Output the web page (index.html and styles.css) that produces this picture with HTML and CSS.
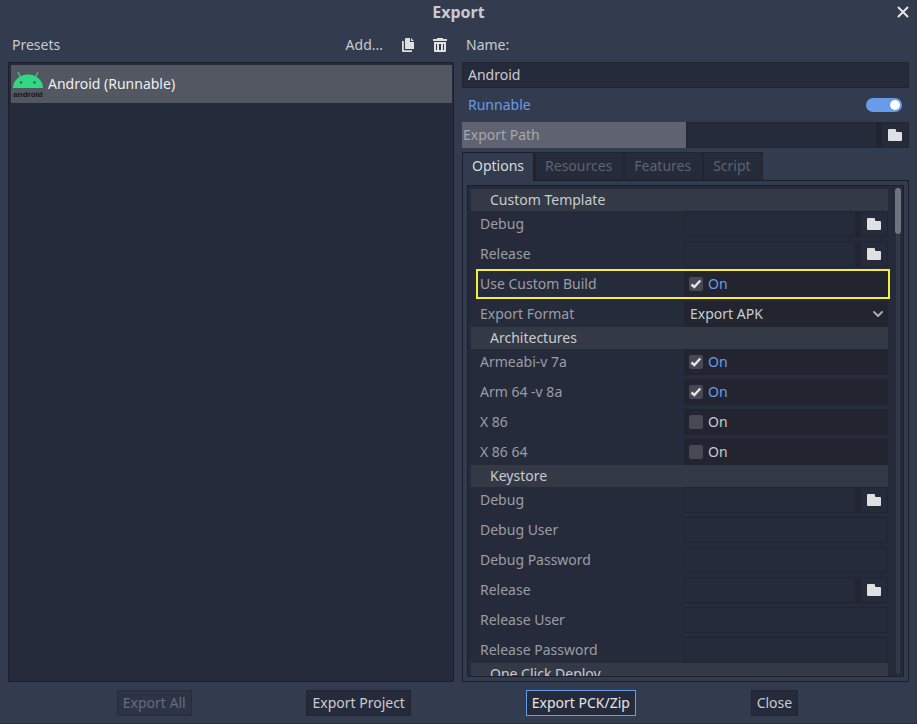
FILE: index.html
```html
<!DOCTYPE html>
<html lang="en">
<head>
<meta charset="utf-8">
<title>Export</title>
<link rel="stylesheet" href="styles.css">
</head>
<body>
<svg class="defs" aria-hidden="true">
  <symbol id="folder" viewBox="0 0 14 12"><path d="M0 1a1 1 0 0 1 1-1h6a1 1 0 0 1 1 1v1a1 1 0 0 0 1 1h4a1 1 0 0 1 1 1v7a1 1 0 0 1-1 1H1a1 1 0 0 1-1-1z"/></symbol>
  <symbol id="tick" viewBox="0 0 14 14"><path d="M2.500 7.500l2.800 2.500 6-6.500" fill="none" stroke="#e4e4e6" stroke-width="2.400"/></symbol>
</svg>

<header class="titlebar">
  <h1>Export</h1>
  <button class="icon-button close" aria-label="Close dialog">
    <svg width="12" height="12" viewBox="0 0 12 12"><path d="M1.500 1.500l9 9M10.500 1.500l-9 9" fill="none" stroke="#e6e6e8" stroke-width="2" stroke-linecap="round"/></svg>
  </button>
</header>

<main class="columns">
  <section class="column">
    <div class="heading presets-heading">
      <h2>Presets</h2>
      <button class="text-button">Add...</button>
      <button class="icon-button" aria-label="Duplicate preset">
        <svg width="14" height="14" viewBox="0 0 14 14"><path d="M5 0h4v4h4v7H4V1a1 1 0 0 1 1-1zM10 0l3 3h-3zM1 3h1.800v9.200H11V14H2a1 1 0 0 1-1-1z"/></svg>
      </button>
      <button class="icon-button" aria-label="Delete preset">
        <svg width="14" height="14" viewBox="0 0 14 14"><path fill-rule="evenodd" d="M4 0h6v1h4v2H0V1h4zM1 4h12v9a1 1 0 0 1-1 1H2a1 1 0 0 1-1-1zM3 6v6h1V6zM6 6v6h2V6zM10 6v6h1V6z"/></svg>
      </button>
    </div>
    <div class="preset-list">
      <button class="preset">
        <svg width="32" height="32" viewBox="0 0 32 32" aria-hidden="true">
          <path d="M1 20a15 13.500 0 0 1 30 0z" fill="#32d982"/>
          <path d="M8.500 9L6.300 4.500M23.500 9l2.200-4.500" stroke="#32d982" stroke-width="1.200" stroke-linecap="round"/>
          <circle cx="9" cy="14.500" r="1.300" fill="#23704f"/><circle cx="22.500" cy="14.500" r="1.300" fill="#23704f"/>
          <text x="16" y="29" text-anchor="middle" class="logo-text">android</text>
        </svg>
        <span>Android (Runnable)</span>
      </button>
    </div>
  </section>

  <section class="column">
    <div class="heading"><label for="name">Name:</label></div>
    <input class="field" id="name" type="text" value="Android">
    <div class="runnable">
      <label for="runnable">Runnable</label>
      <input class="switch" id="runnable" type="checkbox" role="switch" checked>
    </div>
    <div class="export-path">
      <label for="path">Export Path</label>
      <div class="path"><input class="field" id="path" type="text"><button class="browse" aria-label="Browse export path"><svg><use href="#folder"/></svg></button></div>
    </div>
    <nav class="tabs" role="tablist">
      <button class="tab active" role="tab" aria-selected="true">Options</button>
      <button class="tab" role="tab">Resources</button>
      <button class="tab" role="tab">Features</button>
      <button class="tab" role="tab">Script</button>
    </nav>
    <div class="tab-body">
      <div class="inspector">
        <div class="properties">
          <h3>Custom Template</h3>
          <div class="group">
            <div class="row"><label for="t-debug">Debug</label><div class="path"><input class="field" id="t-debug" type="text"><button class="browse" aria-label="Browse debug template"><svg><use href="#folder"/></svg></button></div></div>
            <div class="row"><label for="t-release">Release</label><div class="path"><input class="field" id="t-release" type="text"><button class="browse" aria-label="Browse release template"><svg><use href="#folder"/></svg></button></div></div>
            <div class="row marked"><label for="custom">Use Custom Build</label><label class="check"><span class="box"><input id="custom" type="checkbox" checked><svg><use href="#tick"/></svg></span><span>On</span></label></div>
            <div class="row"><label for="format">Export Format</label><div class="drop"><select id="format"><option>Export APK</option></select><svg width="12" height="8" viewBox="0 0 12 8"><path d="M2 2l4 4 4-4" fill="none" stroke="#a9abb1" stroke-width="2" stroke-linecap="round" stroke-linejoin="round"/></svg></div></div>
          </div>
          <h3>Architectures</h3>
          <div class="group">
            <div class="row"><label for="v7">Armeabi-v 7a</label><label class="check"><span class="box"><input id="v7" type="checkbox" checked><svg><use href="#tick"/></svg></span><span>On</span></label></div>
            <div class="row"><label for="v8">Arm 64 -v 8a</label><label class="check"><span class="box"><input id="v8" type="checkbox" checked><svg><use href="#tick"/></svg></span><span>On</span></label></div>
            <div class="row"><label for="x86">X 86</label><label class="check"><span class="box"><input id="x86" type="checkbox"><svg><use href="#tick"/></svg></span><span>On</span></label></div>
            <div class="row"><label for="x64">X 86 64</label><label class="check"><span class="box"><input id="x64" type="checkbox"><svg><use href="#tick"/></svg></span><span>On</span></label></div>
          </div>
          <h3>Keystore</h3>
          <div class="group">
            <div class="row"><label for="k-debug">Debug</label><div class="path"><input class="field" id="k-debug" type="text"><button class="browse" aria-label="Browse debug keystore"><svg><use href="#folder"/></svg></button></div></div>
            <div class="row"><label for="k-duser">Debug User</label><input class="field" id="k-duser" type="text"></div>
            <div class="row"><label for="k-dpass">Debug Password</label><input class="field" id="k-dpass" type="password"></div>
            <div class="row"><label for="k-release">Release</label><div class="path"><input class="field" id="k-release" type="text"><button class="browse" aria-label="Browse release keystore"><svg><use href="#folder"/></svg></button></div></div>
            <div class="row"><label for="k-ruser">Release User</label><input class="field" id="k-ruser" type="text"></div>
            <div class="row"><label for="k-rpass">Release Password</label><input class="field" id="k-rpass" type="password"></div>
          </div>
          <h3>One Click Deploy</h3>
        </div>
        <div class="scrollbar"><div class="thumb"></div></div>
      </div>
    </div>
  </section>
</main>

<footer class="actions">
  <button class="action" disabled>Export All</button>
  <button class="action">Export Project</button>
  <button class="action primary">Export PCK/Zip</button>
  <button class="action">Close</button>
</footer>
</body>
</html>
```
FILE: styles.css
```css
:root {
  --base: #333b4f;
  --panel: #262b3b;
  --edge: #202531;
  --line: #1b202c;
  --well: #222530;
  --band: #343946;
  --text: #c9cbd0;
  --muted: #9b9da4;
  --accent: #699ce8;
}

* { box-sizing: border-box; }

body {
  margin: 0;
  height: 100vh;
  display: flex;
  flex-direction: column;
  overflow: hidden;
  background: var(--base);
  border-bottom: 1px solid #2a3042;
  color: var(--text);
  font: 14px/20px "Noto Sans", sans-serif;
}

button, input, select { font: inherit; color: inherit; margin: 0; }
button { border: 0; padding: 0; background: none; }
h1, h2, h3 { margin: 0; font-size: 14px; font-weight: 400; }
svg { display: block; }
.defs { position: absolute; width: 0; height: 0; }

.titlebar {
  display: grid;
  grid-template-columns: 1fr auto 1fr;
  align-items: center;
  height: 24px;
  padding: 0 8px;
}
.titlebar h1 { grid-column: 2; font-size: 16px; font-weight: 700; }
.close { justify-self: end; }
.icon-button { fill: #e0e0e0; }

.columns {
  flex: 1;
  min-height: 0;
  display: grid;
  grid-template-columns: minmax(0, 446fr) minmax(0, 447fr);
  gap: 8px;
  padding: 0 8px;
}
.column { display: flex; flex-direction: column; min-height: 0; }
.heading { display: flex; align-items: center; height: 38px; padding: 4px 4px 0; }
.presets-heading { gap: 18px; padding-right: 7px; }
.presets-heading h2 { flex: 1; }

.preset-list {
  flex: 1;
  padding: 2px 1px 2px 2px;
  background: var(--panel);
  border: 1px solid var(--line);
}
.preset {
  display: flex;
  align-items: center;
  gap: 4px;
  width: 100%;
  height: 38px;
  padding: 0 1px 1px;
  background: #535761;
  color: #eeeff0;
}
.logo-text { font: 700 8px "Liberation Sans", sans-serif; fill: #14171c; }

.field {
  display: block;
  width: 100%;
  min-width: 0;
  height: 26px;
  padding: 0 5px 2px;
  background: var(--panel);
  border: 1px solid var(--edge);
  border-radius: 0;
}

.runnable {
  display: flex;
  align-items: center;
  justify-content: space-between;
  height: 34px;
  padding: 0 7px 0 6px;
  color: var(--accent);
}
.switch {
  appearance: none;
  width: 36px;
  height: 14px;
  padding: 2px;
  border-radius: 7px;
  background: #6b7180;
}
.switch::before {
  content: "";
  display: block;
  width: 10px;
  height: 10px;
  border-radius: 50%;
  background: #fff;
}
.switch:checked { background: var(--accent); }
.switch:checked::before { margin-left: auto; }

.export-path { display: grid; grid-template-columns: 1fr 1fr; height: 26px; }
.export-path > label { padding: 3px 1px; background: #5f6371; color: #a5a7ab; }
.path { display: flex; background: var(--well); }
.path .field { flex: 1; border-right: 0; }
.browse {
  width: 27px;
  height: 26px;
  margin-left: 6px;
  display: grid;
  place-items: center;
  background: var(--panel);
  border: 1px solid var(--edge);
  border-left: 0;
}
.browse svg { width: 14px; height: 12px; fill: #e0e0e0; }

.tabs { display: flex; height: 29px; margin-top: 4px; margin-bottom: -1px; z-index: 1; }
.tab {
  height: 28px;
  padding: 0 11px 2px 9px;
  background: var(--panel);
  border: 1px solid var(--edge);
  border-left-width: 2px;
  border-bottom: 0;
  border-right: 0;
  color: #5f636e;
}
.tab:last-child { border-right: 1px solid var(--edge); }
.tab.active {
  height: 29px;
  padding: 0 9px 2px;
  background: var(--base);
  border: 1px solid var(--line);
  border-bottom: 0;
  color: #d8dade;
}

.tab-body {
  flex: 1;
  min-height: 0;
  display: flex;
  padding: 4px;
  border: 1px solid var(--line);
}
.inspector {
  flex: 1;
  min-width: 0;
  display: flex;
  gap: 5px;
  padding: 0 2px 0 3px;
  background: var(--panel);
  border: 1px solid var(--line);
}
.properties { flex: 1; padding: 3px 2px 0 0; overflow: hidden; }
.properties h3 { height: 22px; line-height: 22px; padding-left: 19px; background: var(--band); }
.group { display: grid; gap: 4px; }
.row {
  display: grid;
  grid-template-columns: minmax(0, 1fr) minmax(0, 1fr);
  align-items: center;
  height: 26px;
  padding-left: 9px;
}
.row > label:first-child { color: var(--muted); }
.marked { position: relative; }
.marked::after {
  content: "";
  position: absolute;
  inset: -2px -2px -2px 5px;
  border: 2px solid #f7ee3e;
  pointer-events: none;
}

.check {
  display: flex;
  align-items: center;
  gap: 5px;
  height: 26px;
  padding-left: 5px;
  background: var(--well);
}
.check:has(:checked) { color: var(--accent); }
.box { display: grid; width: 14px; height: 14px; }
.box > * { grid-area: 1 / 1; width: 14px; height: 14px; }
.box input { appearance: none; background: #464953; border-radius: 2px; }
.box svg { visibility: hidden; pointer-events: none; }
.box input:checked + svg { visibility: visible; }

.drop { display: grid; align-items: center; background: var(--well); }
.drop > * { grid-area: 1 / 1; }
.drop select {
  appearance: none;
  height: 26px;
  padding: 0 6px;
  border: 0;
  background: none;
}
.drop svg { justify-self: end; margin-right: 4px; pointer-events: none; }

.scrollbar {
  width: 6px;
  margin: 2px 0 3px;
  background: linear-gradient(var(--band), var(--band)) center / 4px 100% no-repeat;
}
.thumb { height: 46px; border-radius: 3px; background: #70747f; }

.actions {
  display: flex;
  justify-content: space-evenly;
  padding: 8px 4px 7px 2px;
}
.action {
  height: 26px;
  padding: 0 5px;
  background: var(--panel);
  border: 1px solid var(--edge);
}
.action:disabled { background: #2e3447; border-color: #272d3b; color: #676c79; }
.action.primary { border-color: var(--accent); color: #e4e5e8; }
```
